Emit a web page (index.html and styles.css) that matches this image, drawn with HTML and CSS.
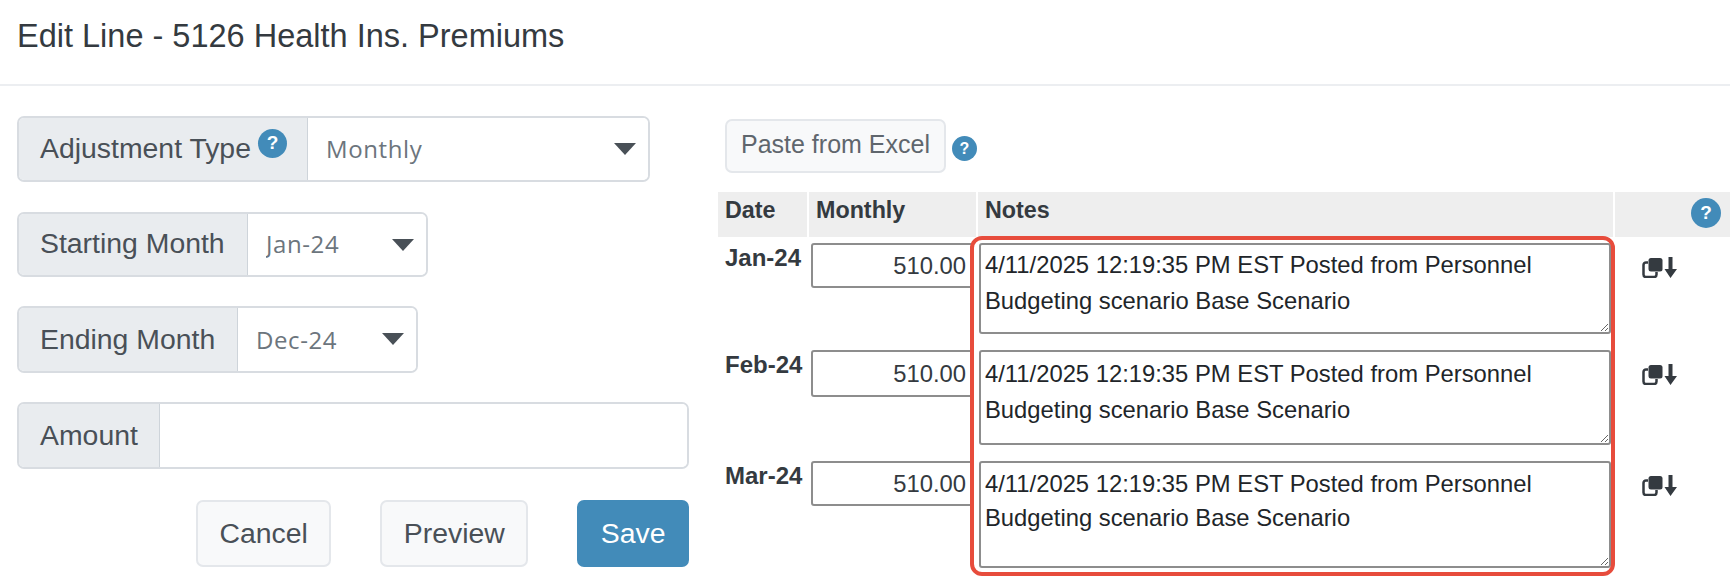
FILE: index.html
```html
<!DOCTYPE html>
<html lang="en">
<head>
    <meta charset="UTF-8">
    <title>Edit Line</title>
    <link rel="stylesheet" href="styles.css">
</head>
<body>
    <header class="page-header">
        <h1>Edit Line - 5126 Health Ins. Premiums</h1>
    </header>

    <main class="edit-line">
        <!-- Left form -->
        <form class="line-form">
            <div class="input-group group-type">
                <label class="group-label">Adjustment Type<span class="help-icon help-sup">?</span></label>
                <div class="select-wrap"><select><option>Monthly</option></select></div>
            </div>
            <div class="input-group group-start">
                <label class="group-label">Starting Month</label>
                <div class="select-wrap"><select><option>Jan-24</option></select></div>
            </div>
            <div class="input-group group-end">
                <label class="group-label">Ending Month</label>
                <div class="select-wrap"><select><option>Dec-24</option></select></div>
            </div>
            <div class="input-group group-amount">
                <label class="group-label">Amount</label>
                <input type="text" class="amount-input">
            </div>
            <div class="form-actions">
                <button type="button" class="btn">Cancel</button>
                <button type="button" class="btn">Preview</button>
                <button type="button" class="btn btn-save">Save</button>
            </div>
        </form>

        <!-- Month grid -->
        <section class="month-panel">
            <div class="paste-row">
                <button type="button" class="btn btn-paste">Paste from Excel</button>
                <span class="help-icon help-small">?</span>
            </div>

            <div class="table-wrap">
                <table class="month-table">
                    <colgroup>
                        <col class="col-date">
                        <col class="col-monthly">
                        <col class="col-notes">
                        <col class="col-copy">
                    </colgroup>
                    <thead>
                        <tr>
                            <th>Date</th>
                            <th>Monthly</th>
                            <th>Notes</th>
                            <th class="th-help"><span class="help-icon help-head">?</span></th>
                        </tr>
                    </thead>
                    <tbody>
                        <tr>
                            <td class="month-name">Jan-24</td>
                            <td><input type="text" class="month-input" value="510.00"></td>
                            <td><textarea class="note note-jan">4/11/2025 12:19:35 PM EST Posted from Personnel Budgeting scenario Base Scenario</textarea></td>
                            <td class="copy-cell">
                                <svg class="copy-icon" viewBox="0 0 35 21"><path d="M6 5.500H4A2.500 2.500 0 0 0 1.500 8v9.500A2.500 2.500 0 0 0 4 20h8a2.500 2.500 0 0 0 2.500-2.500V15" fill="none" stroke="#343a40" stroke-width="2.500"/><rect x="6.500" y="1" width="14" height="13.500" rx="2.500" fill="#343a40"/><path d="M26.500 0h4v12H35l-6.500 9L22.500 12h4z" fill="#343a40"/></svg>
                            </td>
                        </tr>
                        <tr>
                            <td class="month-name">Feb-24</td>
                            <td><input type="text" class="month-input month-input-tall" value="510.00"></td>
                            <td><textarea class="note note-feb">4/11/2025 12:19:35 PM EST Posted from Personnel Budgeting scenario Base Scenario</textarea></td>
                            <td class="copy-cell">
                                <svg class="copy-icon" viewBox="0 0 35 21"><path d="M6 5.500H4A2.500 2.500 0 0 0 1.500 8v9.500A2.500 2.500 0 0 0 4 20h8a2.500 2.500 0 0 0 2.500-2.500V15" fill="none" stroke="#343a40" stroke-width="2.500"/><rect x="6.500" y="1" width="14" height="13.500" rx="2.500" fill="#343a40"/><path d="M26.500 0h4v12H35l-6.500 9L22.500 12h4z" fill="#343a40"/></svg>
                            </td>
                        </tr>
                        <tr>
                            <td class="month-name">Mar-24</td>
                            <td><input type="text" class="month-input" value="510.00"></td>
                            <td><textarea class="note note-mar">4/11/2025 12:19:35 PM EST Posted from Personnel Budgeting scenario Base Scenario</textarea></td>
                            <td class="copy-cell">
                                <svg class="copy-icon" viewBox="0 0 35 21"><path d="M6 5.500H4A2.500 2.500 0 0 0 1.500 8v9.500A2.500 2.500 0 0 0 4 20h8a2.500 2.500 0 0 0 2.500-2.500V15" fill="none" stroke="#343a40" stroke-width="2.500"/><rect x="6.500" y="1" width="14" height="13.500" rx="2.500" fill="#343a40"/><path d="M26.500 0h4v12H35l-6.500 9L22.500 12h4z" fill="#343a40"/></svg>
                            </td>
                        </tr>
                    </tbody>
                </table>
                <!-- Red highlight round the notes -->
                <div class="notes-highlight"></div>
            </div>
        </section>
    </main>
</body>
</html>
```

FILE: styles.css
```css
* {
    margin: 0;
    padding: 0;
    box-sizing: border-box;
    font-family: "Liberation Sans", Arial, sans-serif;
}

html, body {
    height: 579px;
    overflow: hidden;
}

body {
    background-color: #fff;
    color: #212529;
}

/* Header */
.page-header {
    height: 86px;
    padding: 17px 17px 0;
    border-bottom: 2px solid #eceef1;
}

.page-header h1 {
    font-size: 32.5px;
    font-weight: 400;
    line-height: 38px;
    color: #343a40;
}

.edit-line {
    display: flex;
    padding: 30px 0 0 17px;
}

/* Left form */
.line-form {
    width: 672px;
    flex-shrink: 0;
}

.input-group {
    display: flex;
    border: 2px solid #d8dce1;
    border-radius: 7px;
    overflow: hidden;
}

.group-label {
    display: flex;
    align-items: center;
    padding: 0 0 2px 21px;
    background: #e9ecef;
    border-right: 1px solid #ced4da;
    color: #495057;
    font-size: 28.4px;
    white-space: nowrap;
}

.group-type { width: 633px; height: 66px; margin-bottom: 30px; }
.group-type .group-label { width: 289px; }

.group-start { width: 411px; height: 65px; margin-bottom: 29px; }
.group-start .group-label { width: 229px; }

.group-end { width: 401px; height: 67px; margin-bottom: 29px; }
.group-end .group-label { width: 219px; padding-bottom: 0; }

.group-amount { width: 672px; height: 67px; margin-bottom: 31px; }
.group-amount .group-label { width: 141px; padding-bottom: 0; }

.select-wrap {
    position: relative;
    flex: 1;
}

.select-wrap select {
    width: 100%;
    height: 100%;
    padding: 0 0 2px 18px;
    border: none;
    outline: none;
    appearance: none;
    background: #fff;
    color: #6c757d;
    font-family: "Open Sans", sans-serif;
    font-size: 24px;
    letter-spacing: 0.6px;
}

.group-end select {
    padding-bottom: 0;
}

.select-wrap::after {
    content: "";
    position: absolute;
    top: 25px;
    right: 12px;
    border-left: 11px solid transparent;
    border-right: 11px solid transparent;
    border-top: 12px solid #495057;
}

.amount-input {
    flex: 1;
    min-width: 0;
    border: none;
    outline: none;
}

.form-actions {
    display: flex;
    justify-content: flex-end;
    gap: 49px;
}

.btn {
    height: 67px;
    padding: 0 21.5px;
    border: 2px solid #e4e7eb;
    border-radius: 7px;
    background: #f8f9fa;
    color: #495057;
    font-size: 28.4px;
}

.btn-save {
    border-color: #428bb9;
    background: #428bb9;
    color: #fff;
}

/* Help icons */
.help-icon {
    display: inline-flex;
    align-items: center;
    justify-content: center;
    flex-shrink: 0;
    border-radius: 50%;
    background: #428bb9;
    color: #fff;
    font-weight: bold;
}

.help-sup {
    width: 29px;
    height: 29px;
    margin: -10px 0 0 7px;
    font-size: 19px;
}

.help-small {
    width: 25px;
    height: 25px;
    margin: 17px 0 0 6px;
    font-size: 16px;
}

.help-head {
    width: 30px;
    height: 30px;
    font-size: 19px;
}

/* Month grid */
.month-panel {
    flex: 1;
    padding: 3px 0 0 29px;
}

.paste-row {
    display: flex;
    align-items: flex-start;
    margin: 0 0 19px 7px;
}

.btn-paste {
    height: 54px;
    padding: 0 14px 4px;
    font-size: 25px;
    color: #5f666d;
}

.table-wrap {
    position: relative;
}

.month-table {
    width: 1012px;
    table-layout: fixed;
    border-collapse: collapse;
}

.col-date { width: 90px; }
.col-monthly { width: 169px; }
.col-notes { width: 637px; }
.col-copy { width: 116px; }

.month-table th {
    height: 45px;
    padding: 0 0 8px 7px;
    background: #eee;
    border-right: 2px solid #fff;
    text-align: left;
    font-size: 23.3px;
    color: #343a40;
}

.month-table th.th-help {
    padding: 0 9px 4px 0;
    border-right: none;
    text-align: right;
}

.th-help .help-head {
    vertical-align: middle;
}

.month-table td {
    padding-top: 6px;
    vertical-align: top;
}

.month-table td.month-name {
    padding: 7px 0 0 7px;
    font-size: 24px;
    font-weight: bold;
    color: #343a40;
    white-space: nowrap;
}

.month-input {
    display: block;
    width: 163px;
    height: 45px;
    margin-left: 3px;
    padding-right: 6px;
    border: 2px solid #8d8d8d;
    border-radius: 3px;
    outline: none;
    text-align: right;
    font-size: 23.8px;
    color: #343a40;
}

.month-input-tall {
    height: 47px;
}

.note {
    display: block;
    width: 632px;
    margin-left: 2px;
    padding: 2px 4px;
    border: 2px solid #8d8d8d;
    border-radius: 3px;
    outline: none;
    font-size: 23.8px;
    line-height: 35.5px;
    color: #212529;
}

.note-jan { height: 91px; margin-bottom: 10px; }
.note-feb { height: 95px; margin-bottom: 10px; padding-top: 4px; }
.note-mar { height: 107px; padding-top: 4px; line-height: 34px; }

.copy-icon {
    display: block;
    width: 35px;
    height: 21px;
    margin: 14px 0 0 28px;
}

.notes-highlight {
    position: absolute;
    top: 44px;
    left: 252px;
    width: 645px;
    height: 340px;
    border: 4px solid #e74c3c;
    border-radius: 12px;
    pointer-events: none;
}
```
